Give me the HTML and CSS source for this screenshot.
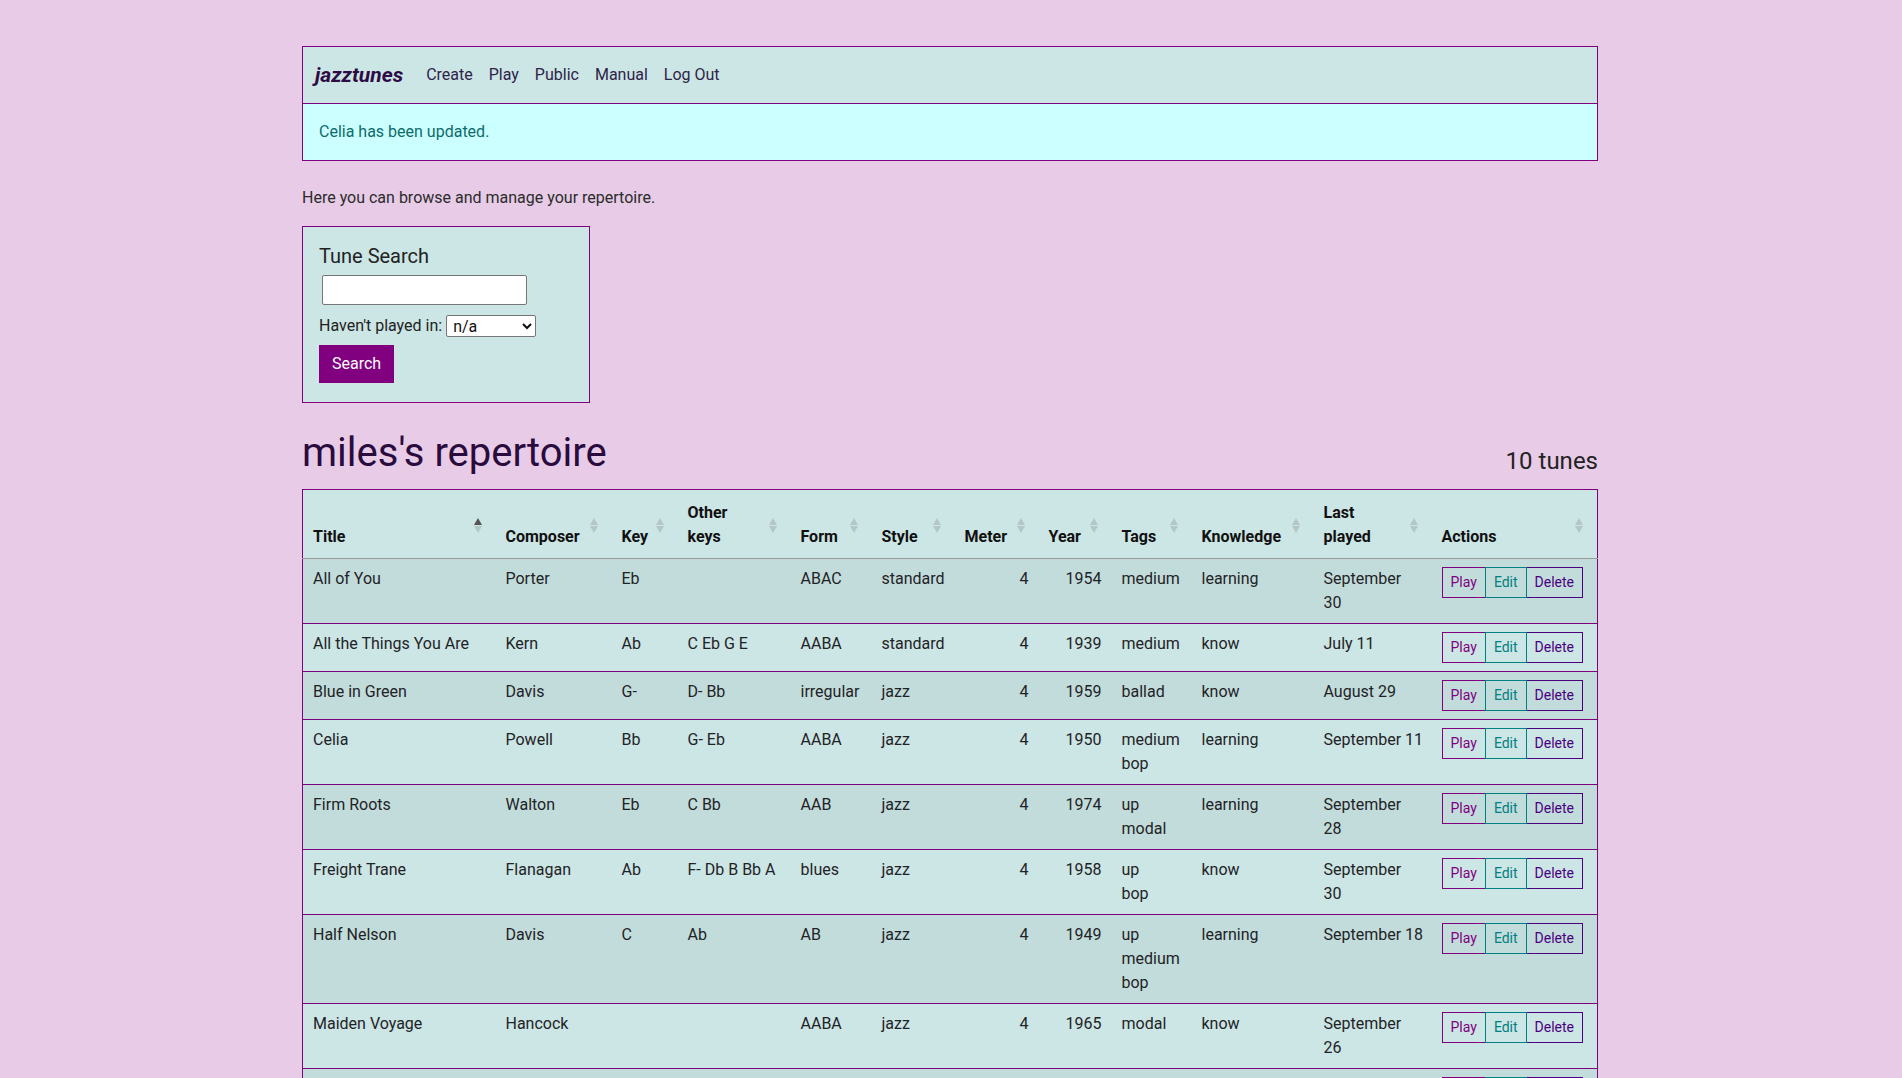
FILE: index.html
```html
<!DOCTYPE html>
<html lang="en">
<head>
<meta charset="utf-8">
<title>jazztunes - repertoire</title>
<link rel="stylesheet" href="styles.css">
</head>
<body>
<div class="container">
  <header class="site-header">
    <nav class="navbar">
      <a class="brand" href="#">jazztunes</a>
      <a class="nav-link" href="#">Create</a>
      <a class="nav-link" href="#">Play</a>
      <a class="nav-link" href="#">Public</a>
      <a class="nav-link" href="#">Manual</a>
      <a class="nav-link" href="#">Log Out</a>
    </nav>
    <div class="flash">Celia has been updated.</div>
  </header>

  <p class="intro">Here you can browse and manage your repertoire.</p>

  <form class="search-panel">
    <h5 class="panel-title">Tune Search</h5>
    <input class="search-input" type="text">
    <div class="filter-row">
      <label class="filter-label" for="timespan">Haven't played in:</label>
      <select id="timespan" class="filter-select">
        <option>n/a</option>
      </select>
    </div>
    <button class="btn-search" type="button">Search</button>
  </form>

  <div class="heading-row">
    <h2 class="page-title">miles's repertoire</h2>
    <h4 class="tune-count">10 tunes</h4>
  </div>

  <table class="tunes">
    <colgroup>
      <col class="c-title"><col class="c-composer"><col class="c-key"><col class="c-other"><col class="c-form"><col class="c-style"><col class="c-meter"><col class="c-year"><col class="c-tags"><col class="c-know"><col class="c-last"><col>
    </colgroup>
    <thead>
      <tr>
        <th class="sort asc">Title</th>
        <th class="sort">Composer</th>
        <th class="sort">Key</th>
        <th class="sort">Other<br>keys</th>
        <th class="sort">Form</th>
        <th class="sort">Style</th>
        <th class="sort">Meter</th>
        <th class="sort">Year</th>
        <th class="sort">Tags</th>
        <th class="sort">Knowledge</th>
        <th class="sort">Last<br>played</th>
        <th class="sort">Actions</th>
      </tr>
    </thead>
    <tbody>
      <tr>
        <td>All of You</td><td>Porter</td><td>Eb</td><td class="nw"></td><td class="nw">ABAC</td><td>standard</td><td class="num">4</td><td class="num">1954</td>
        <td><div>medium</div></td><td>learning</td><td>September<br>30</td>
        <td><div class="btn-group"><a class="btn btn-play" href="#">Play</a><a class="btn btn-edit" href="#">Edit</a><a class="btn btn-delete" href="#">Delete</a></div></td>
      </tr>
      <tr>
        <td>All the Things You Are</td><td>Kern</td><td>Ab</td><td class="nw">C Eb G E</td><td class="nw">AABA</td><td>standard</td><td class="num">4</td><td class="num">1939</td>
        <td><div>medium</div></td><td>know</td><td>July 11</td>
        <td><div class="btn-group"><a class="btn btn-play" href="#">Play</a><a class="btn btn-edit" href="#">Edit</a><a class="btn btn-delete" href="#">Delete</a></div></td>
      </tr>
      <tr>
        <td>Blue in Green</td><td>Davis</td><td>G-</td><td class="nw">D- Bb</td><td class="nw">irregular</td><td>jazz</td><td class="num">4</td><td class="num">1959</td>
        <td><div>ballad</div></td><td>know</td><td>August 29</td>
        <td><div class="btn-group"><a class="btn btn-play" href="#">Play</a><a class="btn btn-edit" href="#">Edit</a><a class="btn btn-delete" href="#">Delete</a></div></td>
      </tr>
      <tr>
        <td>Celia</td><td>Powell</td><td>Bb</td><td class="nw">G- Eb</td><td class="nw">AABA</td><td>jazz</td><td class="num">4</td><td class="num">1950</td>
        <td><div>medium</div><div>bop</div></td><td>learning</td><td class="nw">September 11</td>
        <td><div class="btn-group"><a class="btn btn-play" href="#">Play</a><a class="btn btn-edit" href="#">Edit</a><a class="btn btn-delete" href="#">Delete</a></div></td>
      </tr>
      <tr>
        <td>Firm Roots</td><td>Walton</td><td>Eb</td><td class="nw">C Bb</td><td class="nw">AAB</td><td>jazz</td><td class="num">4</td><td class="num">1974</td>
        <td><div>up</div><div>modal</div></td><td>learning</td><td>September<br>28</td>
        <td><div class="btn-group"><a class="btn btn-play" href="#">Play</a><a class="btn btn-edit" href="#">Edit</a><a class="btn btn-delete" href="#">Delete</a></div></td>
      </tr>
      <tr>
        <td>Freight Trane</td><td>Flanagan</td><td>Ab</td><td class="nw">F- Db B Bb A</td><td class="nw">blues</td><td>jazz</td><td class="num">4</td><td class="num">1958</td>
        <td><div>up</div><div>bop</div></td><td>know</td><td>September<br>30</td>
        <td><div class="btn-group"><a class="btn btn-play" href="#">Play</a><a class="btn btn-edit" href="#">Edit</a><a class="btn btn-delete" href="#">Delete</a></div></td>
      </tr>
      <tr>
        <td>Half Nelson</td><td>Davis</td><td>C</td><td class="nw">Ab</td><td class="nw">AB</td><td>jazz</td><td class="num">4</td><td class="num">1949</td>
        <td><div>up</div><div>medium</div><div>bop</div></td><td>learning</td><td class="nw">September 18</td>
        <td><div class="btn-group"><a class="btn btn-play" href="#">Play</a><a class="btn btn-edit" href="#">Edit</a><a class="btn btn-delete" href="#">Delete</a></div></td>
      </tr>
      <tr>
        <td>Maiden Voyage</td><td>Hancock</td><td></td><td class="nw"></td><td class="nw">AABA</td><td>jazz</td><td class="num">4</td><td class="num">1965</td>
        <td><div>modal</div></td><td>know</td><td>September<br>26</td>
        <td><div class="btn-group"><a class="btn btn-play" href="#">Play</a><a class="btn btn-edit" href="#">Edit</a><a class="btn btn-delete" href="#">Delete</a></div></td>
      </tr>
      <tr>
        <td>Solar</td><td>Davis</td><td>C-</td><td class="nw">Eb</td><td class="nw">irregular</td><td>jazz</td><td class="num">4</td><td class="num">1954</td>
        <td><div>medium</div></td><td>know</td><td>September<br>20</td>
        <td><div class="btn-group"><a class="btn btn-play" href="#">Play</a><a class="btn btn-edit" href="#">Edit</a><a class="btn btn-delete" href="#">Delete</a></div></td>
      </tr>
      <tr>
        <td>Stablemates</td><td>Golson</td><td>Db</td><td class="nw">Eb</td><td class="nw">ABA</td><td>jazz</td><td class="num">4</td><td class="num">1955</td>
        <td><div>medium</div></td><td>learning</td><td>September 5</td>
        <td><div class="btn-group"><a class="btn btn-play" href="#">Play</a><a class="btn btn-edit" href="#">Edit</a><a class="btn btn-delete" href="#">Delete</a></div></td>
      </tr>
    </tbody>
  </table>
</div>
</body>
</html>
```

FILE: styles.css
```css
html {
  scrollbar-width: none;
}

body {
  margin: 0;
  background: #e7cbe7;
  font-family: "Roboto", "Liberation Sans", sans-serif;
  font-size: 16px;
  line-height: 24px;
  color: #212529;
}

.container {
  width: 1296px;
  margin: 0 auto;
  padding: 46px 2px 40px 0;
}

/* header */
.site-header {
  border: 1px solid #800080;
}

.navbar {
  display: flex;
  align-items: center;
  height: 56px;
  padding: 0 12px;
  background: #cce5e5;
  border-bottom: 1px solid #800080;
}

.brand {
  font-size: 21px;
  font-weight: 700;
  font-style: italic;
  color: #2d0b45;
  text-decoration: none;
  margin-right: 15px;
}

.nav-link {
  padding: 0 8px;
  color: #2e2448;
  text-decoration: none;
}

.flash {
  display: flex;
  align-items: center;
  height: 56px;
  padding: 0 16px;
  background: #ccffff;
  color: #0c6b6b;
}

.intro {
  margin: 25px 0 16px;
  color: #2b2b2b;
}

/* search panel */
.search-panel {
  width: 288px;
  box-sizing: border-box;
  border: 1px solid #800080;
  background: #cce5e5;
  padding: 17px 16px 19px;
  margin: 0;
}

.panel-title {
  margin: 0 0 7px;
  font-size: 20px;
  line-height: 24px;
  font-weight: 400;
  color: #222;
}

.search-input {
  display: block;
  box-sizing: border-box;
  width: 205px;
  height: 30px;
  margin: 0 0 9px 3px;
  border: 1px solid #767676;
  border-radius: 2px;
  background: #fff;
  font: inherit;
}

.filter-row {
  display: flex;
  align-items: center;
  height: 24px;
  margin-bottom: 7px;
}

.filter-label {
  margin-right: 4px;
  color: #222;
}

.filter-select {
  box-sizing: border-box;
  width: 90px;
  height: 22px;
  border: 1px solid #767676;
  border-radius: 2px;
  background: #fff;
  font-family: inherit;
  font-size: 16px;
  color: #111;
  padding: 0 0 0 2px;
}

.btn-search {
  display: block;
  height: 38px;
  padding: 0 12px;
  border: 1px solid #800080;
  border-radius: 0;
  background: #800080;
  color: #fff;
  font: inherit;
}

/* heading row */
.heading-row {
  display: flex;
  justify-content: space-between;
  align-items: flex-start;
  margin: 26px 0 12px;
}

.page-title {
  margin: 0;
  font-size: 40px;
  line-height: 48px;
  font-weight: 400;
  color: #2a0b3d;
}

.tune-count {
  margin: 18px 0 0;
  font-size: 24px;
  line-height: 29px;
  font-weight: 400;
  color: #222;
}

/* table */
.tunes {
  width: 100%;
  table-layout: fixed;
  border-collapse: collapse;
  border: 1px solid #800080;
  background: #cce5e5;
}

.c-title { width: 193px; }
.c-composer { width: 116px; }
.c-key { width: 66px; }
.c-other { width: 113px; }
.c-form { width: 81px; }
.c-style { width: 83px; }
.c-meter { width: 84px; }
.c-year { width: 73px; }
.c-tags { width: 80px; }
.c-know { width: 122px; }
.c-last { width: 118px; }

.tunes th {
  position: relative;
  padding: 11px 30px 9px 10px;
  text-align: left;
  vertical-align: bottom;
  font-weight: 700;
  color: #111;
  border-bottom: 1px solid #9a9a9a;
}

.tunes td {
  padding: 8px 10px;
  vertical-align: top;
  border-top: 1px solid #800080;
  color: #1f2326;
}

.tunes tbody tr:first-child td {
  border-top: 1px solid #9a9a9a;
}

.tunes tbody tr:nth-child(odd) {
  background: #c2dcdc;
}

.tunes td.num {
  text-align: right;
}

.tunes td.nw {
  white-space: nowrap;
}

/* sort arrows */
.sort::before,
.sort::after {
  content: "";
  position: absolute;
  right: 14px;
  width: 0;
  height: 0;
  border-left: 4px solid transparent;
  border-right: 4px solid transparent;
}

.sort::before {
  top: 28px;
  border-bottom: 7px solid #b3c7c7;
}

.sort::after {
  top: 36px;
  border-top: 7px solid #b3c7c7;
}

.sort.asc::before {
  border-bottom-color: #555;
}

/* action buttons */
.btn-group {
  display: inline-flex;
}

.btn {
  display: inline-block;
  padding: 4px 8px;
  font-size: 14px;
  line-height: 21px;
  text-decoration: none;
  border: 1px solid;
  background: transparent;
}

.btn + .btn {
  margin-left: -1px;
}

.btn-play {
  color: #800080;
  border-color: #800080;
}

.btn-edit {
  color: #008080;
  border-color: #008080;
  position: relative;
}

.btn-delete {
  color: #4b0082;
  border-color: #4b0082;
}
```
